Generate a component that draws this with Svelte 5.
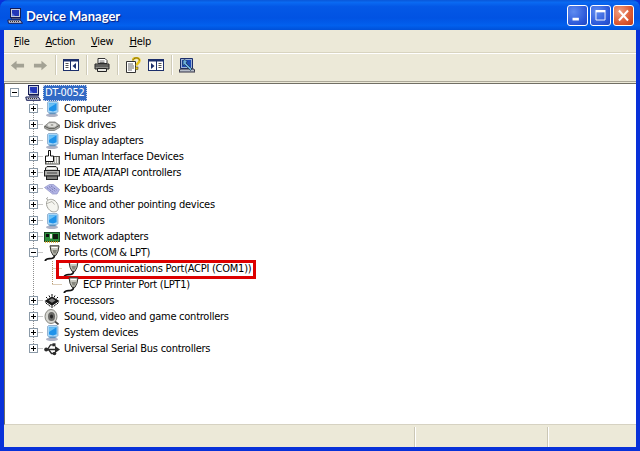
<script>
  const rows = [
    { label: 'Computer', icon: 'monitor' },
    { label: 'Disk drives', icon: 'disk' },
    { label: 'Display adapters', icon: 'monitor' },
    { label: 'Human Interface Devices', icon: 'hid' },
    { label: 'IDE ATA/ATAPI controllers', icon: 'ide' },
    { label: 'Keyboards', icon: 'keyboard' },
    { label: 'Mice and other pointing devices', icon: 'mouse' },
    { label: 'Monitors', icon: 'monitor' },
    { label: 'Network adapters', icon: 'net' },
    { label: 'Ports (COM & LPT)', icon: 'port', open: true },
    { label: 'Communications Port(ACPI (COM1))', icon: 'port', child: true, flagged: true },
    { label: 'ECP Printer Port (LPT1)', icon: 'port', child: true, lastChild: true },
    { label: 'Processors', icon: 'cpu' },
    { label: 'Sound, video and game controllers', icon: 'sound' },
    { label: 'System devices', icon: 'monitor' },
    { label: 'Universal Serial Bus controllers', icon: 'usb', last: true }
  ];
  const menus = [['F', 'ile'], ['A', 'ction'], ['V', 'iew'], ['H', 'elp']];
</script>

{#snippet pcIcon()}
  <svg class="icon" viewBox="0 0 16 16">
    <rect x="3.5" y="0.5" width="10" height="9" fill="#c8cede" stroke="#141c55"/>
    <rect x="5" y="2" width="7" height="6" fill="#2438b8"/>
    <path d="M5 8h3L5 5z" fill="#5c78e0"/>
    <path d="M5 10h8l1 1H4z" fill="#8d93aa" stroke="#141c55" stroke-width=".6"/>
    <path d="M.8 12h12.500l2.200 3.300H1.500z" fill="#c4c6d4" stroke="#141c55"/>
    <path d="M3 13.500h9.500" stroke="#333" stroke-dasharray="1 1"/>
  </svg>
{/snippet}

{#snippet deviceIcon(kind)}
  <svg class="icon" viewBox="0 0 16 16">
    {#if kind === 'monitor'}
      <ellipse cx="8" cy="14.200" rx="6" ry="1.700" fill="#aeb3c6"/>
      <path d="M4.500 .5h8.500l1 1.200v8.800l-2.500 2.500H5.500l-2-2.500V1.500z" fill="#a6d6f8" stroke="#7d9cbe" stroke-width=".7"/>
      <path d="M5 2.200h7.600v7L9 10.500 5 9.500z" fill="#1f93ea"/>
      <path d="M5 2.200h7.600L5 7z" fill="#6dc0f4"/>
      <path d="M4.800 11.400h7.500l-1.300 1.700H6z" fill="#5f93bf"/>
    {:else if kind === 'disk'}
      <path d="M.5 9.200 5.500 5h5.500l4.500 3.200v2.300L10.500 13.500H5L.5 11.200z" fill="#a9a9a6" stroke="#6f6f6a" stroke-width=".7"/>
      <path d="M.5 9.200 5 11.400h5.500l5-3.200" fill="none" stroke="#55554f" stroke-width=".9"/>
      <ellipse cx="8" cy="8" rx="4.500" ry="1.900" fill="#e2e2de"/>
      <ellipse cx="8" cy="8" rx="1.500" ry=".7" fill="#8d8d88"/>
    {:else if kind === 'hid'}
      <rect x="1.500" y="7.500" width="14" height="7.500" fill="#f2f2ec" stroke="#4f4f4a"/>
      <path d="M4.500 1.500H6.500V7H9.500V12.500H1.500V7H4.500z" fill="#fff" stroke="#111"/>
      <path d="M10 9h5M10 11h5M10 13h5M2 14h7" stroke="#666" stroke-dasharray="1 1"/>
    {:else if kind === 'ide'}
      <path d="M3 1.500h9l1.500 1.500v3H1.500V3z" fill="#d8d8d4" stroke="#222"/>
      <rect x=".5" y="5.500" width="15" height="5.500" fill="#aeaeab" stroke="#222"/>
      <rect x="2.500" y="11" width="11" height="3.500" fill="#7f7f7c" stroke="#222"/>
      <path d="M3 8h10" stroke="#444"/>
      <path d="M3.500 3.500h8" stroke="#fff"/>
    {:else if kind === 'keyboard'}
      <path d="M.5 6.500 5.500 3.500h4l6 5-2.500 4.500H8.500z" fill="#b3b5e6" stroke="#8d90c4" stroke-width=".7"/>
      <path d="M3 6.500l6.500 5M5 5.500l6.500 5M7 4.800l5.500 4.200" stroke="#62649e" stroke-dasharray="1 1"/>
    {:else if kind === 'mouse'}
      <path d="M4 .5 2.500 1.500 4.500 4" fill="none" stroke="#8f8f8a" stroke-width=".9"/>
      <path d="M2.500 5.500C3 2.500 7 1.500 10 3.200c3.500 2 5 6.300 4 9.300-.9 2.700-5.500 3.200-8 1C3.200 11.200 2.200 8 2.500 5.500z" fill="#f5f5f0" stroke="#a0a09a"/>
      <path d="M3 6.500 8 4.500M8 4.500l2.500 3" stroke="#b5b5ae" fill="none"/>
    {:else if kind === 'net'}
      <rect x=".5" y="3.500" width="15" height="9" fill="#2c8d3c" stroke="#0d3b15" stroke-width=".9"/>
      <rect x="2" y="5" width="3" height="3" fill="#0e0e0e"/>
      <rect x="6" y="5" width="2" height="4.500" fill="#f0f0e6"/>
      <rect x="9" y="5" width="5" height="5" fill="#101c10"/>
      <path d="M1 13h14" stroke="#d4a41c" stroke-width="1.500" stroke-dasharray="1 1"/>
    {:else if kind === 'port'}
      <path d="M6 .8h9l-1 5.500-2 4H9l-2-4z" fill="#c4c4bb" stroke="#33332e"/>
      <path d="M7.500 2.500h6" stroke="#fff" stroke-width="1.200"/>
      <path d="M8.500 5h4.500l-1 3.500H9.500z" fill="#86867d"/>
      <path d="M10.500 10.500c0 2.800-2 3.200-5 3.200-2 0-3.500.4-4.500 2.300" fill="none" stroke="#111" stroke-width="1.700"/>
    {:else if kind === 'cpu'}
      <path d="M.5 8 8 3.500l7.500 4.500L8 12.800z" fill="#161616"/>
      <path d="M4.500 7.500 8 5.200l3.500 2.300L8 9.800z" fill="#7d7d7d"/>
      <path d="M1.500 9.500 3.500 11.500M4.500 11.500l1.500 2M8 12.500v2.500M11.500 11.500l-1.500 2M14.500 9.500l-2 2M3.500 5.500l-1.500-1.500M12.500 5.500l1.500-1.500M6 4.500 5 2.500M10 4.500l1-2M8 3.500V1" stroke="#0a0a0a"/>
    {:else if kind === 'sound'}
      <ellipse cx="7" cy="7.500" rx="6" ry="7" fill="#d5d5d0" stroke="#85857f"/>
      <ellipse cx="7.500" cy="7.500" rx="3.500" ry="4.500" fill="#6a6a67"/>
      <ellipse cx="7.500" cy="7.500" rx="1.500" ry="2" fill="#262626"/>
      <path d="M11 12.500l3.500 3" stroke="#4a4a48" stroke-width="1.700"/>
    {:else if kind === 'usb'}
      <path d="M1 8.500h11" stroke="#2b2b2b" stroke-width="1.500"/>
      <path d="M11 5l5 3.500L11 12z" fill="#2b2b2b"/>
      <path d="M3.500 8.500 6.500 3.800H9M4.500 8.500l3 4H10" fill="none" stroke="#2b2b2b" stroke-width="1.300"/>
      <rect x="8.500" y="2.300" width="3" height="3" fill="#2b2b2b"/>
      <circle cx="10.500" cy="12.500" r="1.800" fill="#2b2b2b"/>
      <circle cx="2.200" cy="8.500" r="2" fill="#2b2b2b"/>
    {/if}
  </svg>
{/snippet}

{#snippet expander(open)}
  <svg class="gutter" viewBox="0 0 19 16">
    <rect x="5.500" y="3.500" width="8" height="8" fill="#fff" stroke="#8b9aa8"/>
    <path d="M7 7.500h5" stroke="#000"/>
    {#if !open}<path d="M9.500 5v5" stroke="#000"/>{/if}
  </svg>
{/snippet}

<div class="window">
  <header class="titlebar">
    {@render pcIcon()}
    <span class="title">Device Manager</span>
    <div class="controls">
      <button class="ctl" aria-label="Minimize"><svg viewBox="0 0 21 19"><rect x="5" y="12" width="7" height="3" fill="#fff"/></svg></button>
      <button class="ctl" aria-label="Maximize"><svg viewBox="0 0 21 19"><path d="M5.500 5.500h10v9h-10z" fill="none" stroke="#fff"/><path d="M5 4.500h11" stroke="#fff" stroke-width="2"/></svg></button>
      <button class="ctl close" aria-label="Close"><svg viewBox="0 0 21 19"><path d="M5.500 4l10 11M15.500 4l-10 11" stroke="#fff" stroke-width="2.200"/></svg></button>
    </div>
  </header>

  <div class="body">
    <nav class="menubar">
      {#each menus as [key, rest]}
        <span class="menu"><u>{key}</u>{rest}</span>
      {/each}
    </nav>

    <div class="toolbar">
      <svg class="tool nav" viewBox="0 0 16 16"><path d="M1 8l6-5v3h8v4H7v3z" fill="#a3a294"/></svg>
      <svg class="tool nav second" viewBox="0 0 16 16"><path d="M15 8L9 3v3H1v4h8v3z" fill="#a3a294"/></svg>
      <i class="sep"></i>
      <svg class="tool" viewBox="0 0 16 16"><rect x=".5" y="2.500" width="15" height="11" fill="#fff" stroke="#1c2f6b"/><rect x=".5" y="2.500" width="15" height="2" fill="#1c2f6b"/><path d="M7.500 3v10" stroke="#1c2f6b"/><path d="M2.500 6.500h3M2.500 8.500h3M2.500 10.500h3" stroke="#555"/><path d="M13 6v6L9.500 9z" fill="#1c2f6b"/></svg>
      <i class="sep"></i>
      <svg class="tool" viewBox="0 0 16 16"><path d="M4 1.500h7l2 2v3H4z" fill="#fff" stroke="#333"/><path d="M1 7h14v5H1z" fill="#8f8f8a" stroke="#222"/><path d="M1 9h14" stroke="#333"/><path d="M3.500 11.500h9v3h-9z" fill="#e7e7e2" stroke="#222"/><path d="M5.500 4h5M5.500 5.500h5" stroke="#777"/></svg>
      <i class="sep"></i>
      <svg class="tool" viewBox="0 0 16 16"><path d="M1.500 4.500h9v11h-9z" fill="#fff" stroke="#333"/><path d="M3 7h5M3 9h6M3 11h6M3 13h4" stroke="#6a6a6a"/><path d="M8 3.500c0-3.500 6.500-3.500 6.500 0 0 2.500-2.800 2.500-2.800 5" fill="none" stroke="#e8c41a" stroke-width="2.400"/><path d="M8 3.500c0-3.500 6.500-3.500 6.500 0" fill="none" stroke="#3b3410" stroke-width=".6"/><rect x="10.400" y="10" width="2.600" height="2.600" fill="#e8c41a" stroke="#3b3410" stroke-width=".5"/></svg>
      <svg class="tool gapped" viewBox="0 0 16 16"><rect x=".5" y="2.500" width="15" height="11" fill="#fff" stroke="#1c2f6b"/><rect x=".5" y="2.500" width="15" height="2" fill="#1c2f6b"/><path d="M8.500 3v10" stroke="#1c2f6b"/><path d="M10.500 6.500h3M10.500 8.500h3M10.500 10.500h3" stroke="#555"/><path d="M3 6v6l3.500-3z" fill="#1c2f6b"/></svg>
      <i class="sep"></i>
      <svg class="tool" viewBox="0 0 16 16"><path d="M1.500 1.500h12v10h-12z" fill="#9fb4d6" stroke="#1c2f6b"/><path d="M3 3h9v7H3z" fill="#1f4cb4"/><path d="M1 12h14l1 3H0z" fill="#b8bec9" stroke="#334"/><path d="M4 3.500l2-1 2 2-1 1.500 6 6-1.500 1.500-6-6-1.500 1z" fill="#6db1dd" stroke="#123" stroke-width=".6"/></svg>
    </div>

    <main class="tree">
      <div class="row">
        {@render expander(true)}
        {@render pcIcon()}
        <span class="label selected">DT-0052</span>
      </div>

      {#each rows as row}
        <div class="row">
          <span class="gutter"></span>
          {#if row.child}
            <svg class="gutter" viewBox="0 0 19 16"><path d="M9.500 0v16" class="dots"/></svg>
            <svg class="gutter" viewBox="0 0 19 16"><path d={row.lastChild ? 'M9.500 0v8M9.500 7.500H19' : 'M9.500 0v16M9.500 7.500H19'} class="dots orange"/></svg>
          {:else}
            <span class="node">
              <svg class="gutter" viewBox="0 0 19 16"><path d={row.last ? 'M9.500 0v8M9.500 7.500H19' : 'M9.500 0v16M9.500 7.500H19'} class="dots"/></svg>
              <span class="box">{@render expander(row.open)}</span>
            </span>
          {/if}
          <span class="iconwrap" class:flagged={row.flagged}>
            {@render deviceIcon(row.icon)}
            <span class="label">{row.label}</span>
          </span>
        </div>
      {/each}
    </main>

    <footer class="status">
      <i class="pane grow"></i>
      <i class="pane mid"></i>
      <i class="pane end"></i>
    </footer>
  </div>
</div>

<style>
  :global(body) { margin: 0; background: #0831d9; }
  .window {
    width: 640px; height: 451px; display: flex; flex-direction: column; overflow: hidden;
    font: 11px "DejaVu Sans Condensed", "Liberation Sans", sans-serif; font-stretch: condensed; letter-spacing: -.25px; color: #000; box-sizing: border-box;
    background: #0831d9; border-radius: 8px 8px 0 0;
  }
  .titlebar {
    height: 30px; flex: none; display: flex; align-items: center; padding: 1px 6px 0 6px; box-sizing: border-box;
    background: linear-gradient(180deg, #0a57d8 0%, #0a6af2 8%, #0458e6 22%, #0153e3 60%, #0260ee 85%, #0050d8 100%);
  }
  .title {
    margin-left: 3px; color: #fff; font: bold 13px Lato, sans-serif; letter-spacing: 0; text-shadow: 1px 1px 1px #0a1f80; padding-top: 1px;
  }
  .controls { margin-left: auto; display: flex; gap: 2px; margin-top: -1px; }
  .ctl {
    width: 21px; height: 21px; padding: 0; border: 1px solid #fff; border-radius: 3px; display: block;
    background: radial-gradient(circle at 30% 30%, #5f8cf0, #2a56d8 70%, #2248c0);
  }
  .ctl svg { display: block; width: 19px; height: 19px; }
  .close { background: radial-gradient(circle at 30% 30%, #f0a083, #dc5a33 60%, #c03a18); }
  .body {
    flex: 1; min-height: 0; margin: 0 4px 4px; background: #ece9d8; display: flex; flex-direction: column;
  }
  .menubar {
    height: 23px; flex: none; display: flex; align-items: center; padding-left: 2px; box-sizing: border-box;
    border-bottom: 1px solid #d8d4c0; box-shadow: 0 1px 0 #fff;
  }
  .menu { padding: 0 8px; }
  .toolbar {
    height: 29px; flex: none; display: flex; align-items: center; padding: 0 0 4px 6px; box-sizing: border-box;
    border-bottom: 1px solid #aca899;
  }
  .tool { width: 16px; height: 16px; flex: none; }
  .nav { width: 15px; height: 15px; }
  .second { margin-left: 8px; }
  .gapped { margin-left: 7px; }
  .sep { width: 1px; height: 20px; background: #cfcbb8; margin: 0 7px; box-shadow: 1px 0 0 #fff; }
  .tree {
    flex: 1; min-height: 0; background: #fff; padding: 1px 0 0; box-sizing: border-box;
    border-top: 1px solid #716f64; border-left: 1px solid #716f64; margin-top: 1px;
    border-bottom: 1px solid #d6d2c2;
  }
  .row { height: 16px; display: flex; align-items: center; white-space: nowrap; }
  .gutter { width: 19px; height: 16px; flex: none; display: block; }
  .node { position: relative; width: 19px; height: 16px; flex: none; }
  .box { position: absolute; inset: 0; }
  .dots { fill: none; stroke: #8e8e8e; stroke-dasharray: 1 1; }
  .orange { stroke: #b99a70; }
  .icon { width: 16px; height: 16px; flex: none; margin-left: 1px; }
  .iconwrap { display: flex; align-items: center; position: relative; }
  .label { margin-left: 2px; padding: 0 2px; line-height: 16px; }
  .selected { background: #316ac5; color: #fff; outline: 1px dotted #cdd6e8; outline-offset: -1px; }
  .flagged::after {
    content: ""; position: absolute; left: -6px; top: -1px; width: 194px; height: 13px;
    border: 3px solid #dd0000; pointer-events: none;
  }
  .status { height: 22px; flex: none; display: flex; background: #ece9d8; padding-top: 2px; box-sizing: border-box; }
  .pane { display: block; height: 100%; border-right: 1px solid #cbc7b5; box-shadow: 1px 0 0 #fff; box-sizing: border-box; }
  .grow { flex: 1; }
  .mid { width: 133px; }
  .end { width: 88px; border-right: 0; box-shadow: none; }
</style>
